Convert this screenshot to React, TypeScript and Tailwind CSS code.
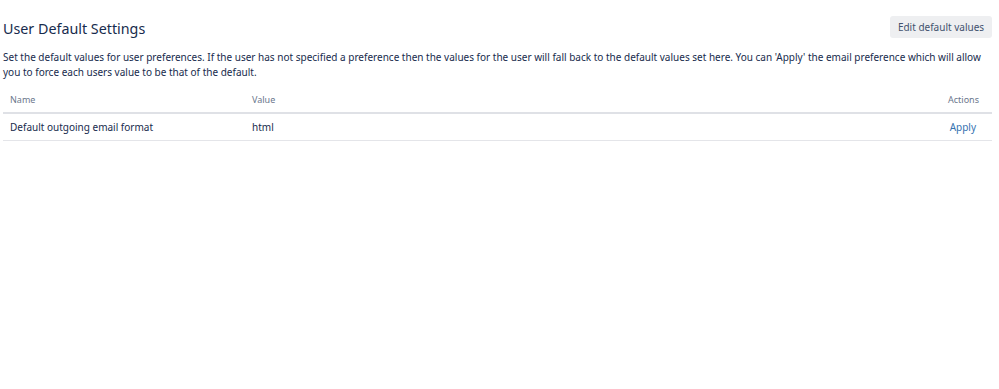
export default function App() {
  return (
    <div className="w-[999px] h-[389px] bg-white text-[#172b4d] font-['Noto_Sans',sans-serif]">
      <div className="w-[992px] pl-[3px] pt-[15px]">
        <div className="flex items-center justify-between h-[24px]">
          <h1 className="pt-[3px] text-[14.3px] leading-[24px] font-normal text-[#172b4d]">User Default Settings</h1>
          <button className="h-[22px] w-[102px] bg-[#eeeff1] text-[10px] leading-[22px] text-[#42526e] rounded-[3px]">Edit default values</button>
        </div>
        <p className="mt-[11px] w-[981px] text-[10px] leading-[15px] text-[#172b4d]">
          Set the default values for user preferences. If the user has not specified a preference then the values for the user will fall back to the default values set here. You can 'Apply' the email preference which will allow you to force each users value to be that of the default.
        </p>
        <table className="mt-[8px] w-full border-collapse text-left">
          <thead>
            <tr className="border-b-2 border-[#dfe1e6]">
              <th className="pl-[7px] p-0 h-[25px] text-[9px] leading-[12px] font-normal text-[#6b778c] w-[249px]">Name</th>
              <th className="p-0 h-[25px] text-[9px] leading-[12px] font-normal text-[#6b778c]">Value</th>
              <th className="pr-[13px] h-[25px] text-[9px] leading-[12px] font-normal text-[#6b778c] text-right">Actions</th>
            </tr>
          </thead>
          <tbody>
            <tr className="border-b border-[#e4e5e9]">
              <td className="pl-[7px] h-[27px] text-[10px] leading-[14px]">Default outgoing email format</td>
              <td className="h-[27px] text-[10px] leading-[14px]">html</td>
              <td className="pr-[16px] h-[27px] text-[10px] leading-[14px] text-right">
                <a className="text-[#3572b0]">Apply</a>
              </td>
            </tr>
          </tbody>
        </table>
      </div>
    </div>
  );
}
